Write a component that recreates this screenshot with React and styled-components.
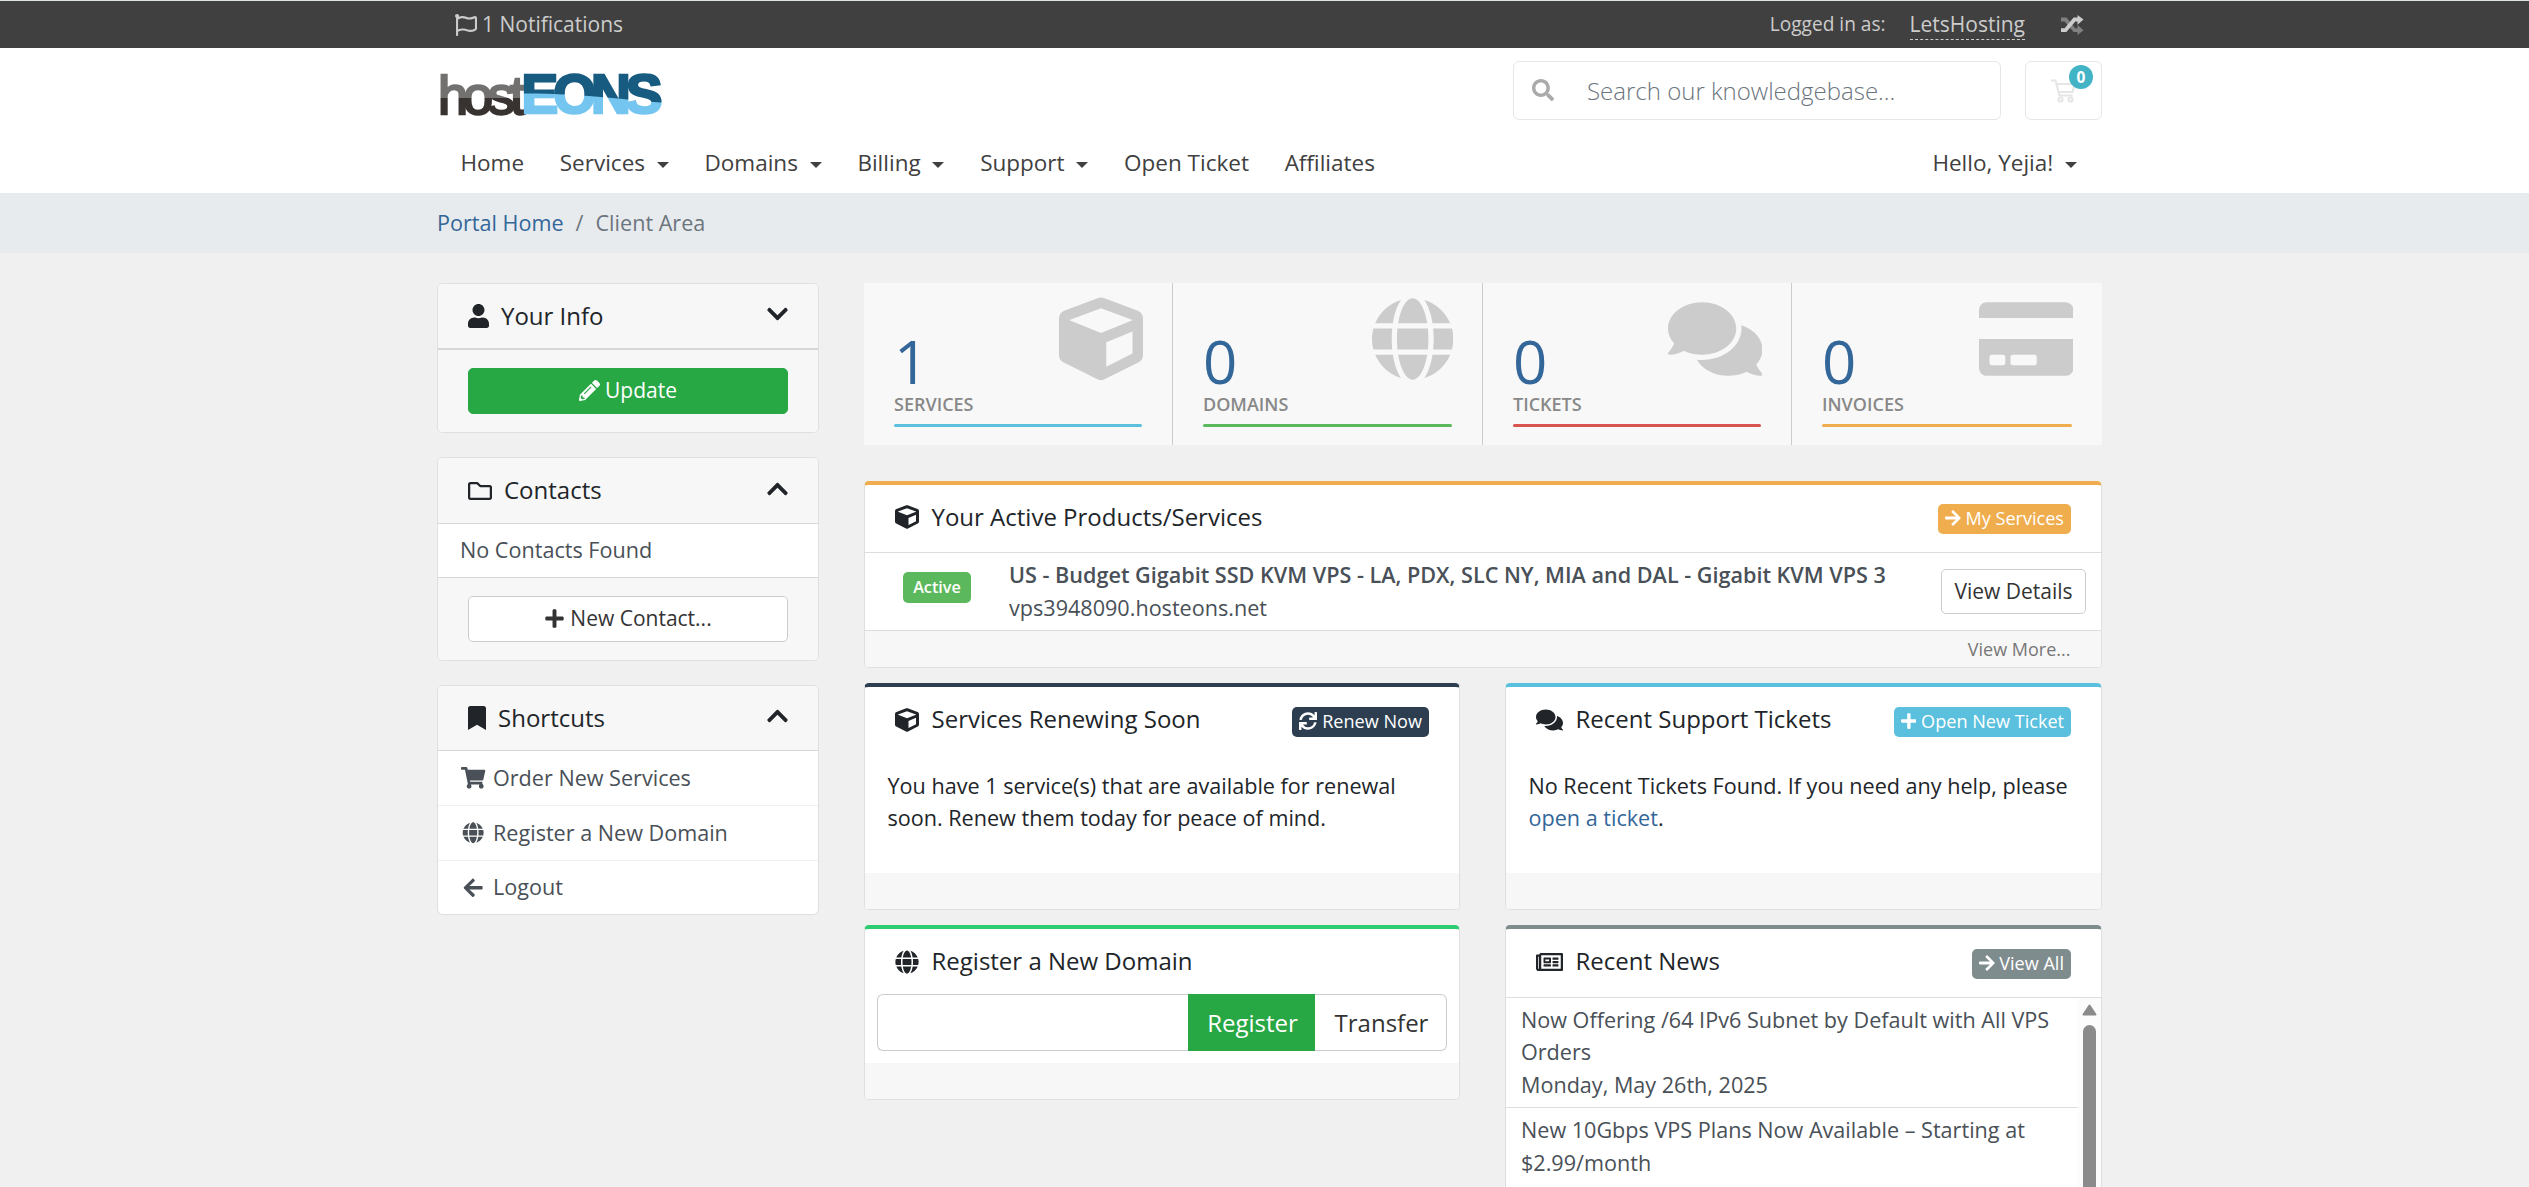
import React from 'react';
import styled, { createGlobalStyle } from "styled-components";
import {
    FaRegFlag, FaSearch, FaUser, FaChevronDown, FaChevronUp, FaPencilAlt, FaRegFolder, FaPlus,
    FaBookmark, FaShoppingCart, FaGlobe, FaArrowLeft, FaArrowRight, FaCube, FaComments,
    FaCreditCard, FaSync, FaRegNewspaper
} from "react-icons/fa";

const nav = [
    {name: "Home"},
    {name: "Services", menu: true},
    {name: "Domains", menu: true},
    {name: "Billing", menu: true},
    {name: "Support", menu: true},
    {name: "Open Ticket"},
    {name: "Affiliates"},
];

const tiles = [
    {count: 1, title: "Services", color: "#5bc0de", icon: FaCube, width: 84},
    {count: 0, title: "Domains", color: "#5cb85c", icon: FaGlobe, width: 81.4},
    {count: 0, title: "Tickets", color: "#d9534f", icon: FaComments, width: 94.5},
    {count: 0, title: "Invoices", color: "#f0ad4e", icon: FaCreditCard, width: 94.5},
];

const shortcuts = [
    {name: "Order New Services", icon: FaShoppingCart},
    {name: "Register a New Domain", icon: FaGlobe},
    {name: "Logout", icon: FaArrowLeft},
];

const news = [
    {title: "Now Offering /64 IPv6 Subnet by Default with All VPS Orders", date: "Monday, May 26th, 2025"},
    {title: "New 10Gbps VPS Plans Now Available – Starting at $2.99/month", date: "Sunday, May 25th, 2025"},
];

const Logo = () => (
    <svg width="228" height="46" viewBox="0 0 228 46">
        <defs>
            <linearGradient id="host" x1="0" y1="0" x2="0" y2="46" gradientUnits="userSpaceOnUse">
                <stop offset="0.56" stopColor="#73716f"/>
                <stop offset="0.56" stopColor="#383330"/>
            </linearGradient>
            <pattern id="eons" width="228" height="46" patternUnits="userSpaceOnUse">
                <rect width="228" height="46" fill="#75c5f1"/>
                <path d="M0 0H228V31C190 29 150 21.5 84 21.5H0Z" fill="#185b81"/>
            </pattern>
        </defs>
        <text x="-2" y="41.5" fontFamily="Liberation Sans, sans-serif" fontSize="54" fill="url(#host)"
              stroke="url(#host)" strokeWidth="2.4" textLength="87" lengthAdjust="spacing">host</text>
        <text x="81.5" y="41" fontFamily="Liberation Sans, sans-serif" fontWeight="700" fontSize="55"
              fill="url(#eons)" stroke="url(#eons)" strokeWidth="2.6" textLength="141" lengthAdjust="spacing">EONS</text>
    </svg>
);

const CartIcon = () => (
    <svg width="26" height="24" viewBox="0 0 26 24" fill="none" stroke="#e6e6e6" strokeWidth="2.2">
        <path d="M0 1.5H4.5L8.5 16.5H21.5M5.5 5H24L21.5 13H7.8"/>
        <circle cx="9.5" cy="20.5" r="2"/>
        <circle cx="19.5" cy="20.5" r="2"/>
    </svg>
);

const ShuffleIcon = () => (
    <svg width="23" height="20" viewBox="0 0 23 20" fill="none" strokeWidth="3.8">
        <path d="M0 4.5H4.5L13.5 15.2H18" stroke="#808080"/>
        <path d="M16.5 10L22.5 15.2L16.5 20Z" fill="#808080"/>
        <path d="M0 15.2H4.5L13.5 4.5H18" stroke="#ccc"/>
        <path d="M16.5 0L22.5 4.5L16.5 9.8Z" fill="#ccc"/>
    </svg>
);

const App = () => {
    return (
        <Page>
            <GlobalStyle/>
            <TopBar>
                <Container>
                    <Notifications><FaRegFlag/>1 Notifications</Notifications>
                    <Account>
                        <span>Logged in as:</span>
                        <a>LetsHosting</a>
                        <ShuffleIcon/>
                    </Account>
                </Container>
            </TopBar>
            <Header>
                <Container>
                    <Logo/>
                    <Tools>
                        <Search>
                            <FaSearch/>
                            <input type="text" placeholder="Search our knowledgebase..."/>
                        </Search>
                        <Cart>
                            <CartIcon/>
                            <span>0</span>
                        </Cart>
                    </Tools>
                </Container>
            </Header>
            <Nav>
                <Container>
                    <ul>
                        {nav.map(item => (
                            <li key={item.name}>{item.name}{item.menu && <Caret/>}</li>
                        ))}
                    </ul>
                    <ul>
                        <li>Hello, Yejia!<Caret/></li>
                    </ul>
                </Container>
            </Nav>
            <Breadcrumb>
                <Container>
                    <a>Portal Home</a>
                    <span>/</span>
                    <p>Client Area</p>
                </Container>
            </Breadcrumb>
            <Body>
                <Sidebar>
                    <SideCard>
                        <SideHeader $height={66} $line={2} $icon={21}>
                            <FaUser/>Your Info<FaChevronDown className="arrow"/>
                        </SideHeader>
                        <SideFooter>
                            <SideButton $green><FaPencilAlt/>Update</SideButton>
                        </SideFooter>
                    </SideCard>
                    <SideCard>
                        <SideHeader $height={66} $line={1} $icon={24}>
                            <FaRegFolder/>Contacts<FaChevronUp className="arrow"/>
                        </SideHeader>
                        <SideItem $height={53}>No Contacts Found</SideItem>
                        <SideFooter $line>
                            <SideButton><FaPlus/>New Contact...</SideButton>
                        </SideFooter>
                    </SideCard>
                    <SideCard>
                        <SideHeader $height={65} $line={1} $icon={18}>
                            <FaBookmark/>Shortcuts<FaChevronUp className="arrow"/>
                        </SideHeader>
                        {shortcuts.map(({name, icon: Icon}) => (
                            <SideItem key={name} $height={54.4}><i><Icon/></i>{name}</SideItem>
                        ))}
                    </SideCard>
                </Sidebar>
                <Main>
                    <Tiles>
                        {tiles.map(({count, title, color, icon: Icon, width}) => (
                            <Tile key={title} $color={color} $icon={width}>
                                <Icon className="icon"/>
                                <h2>{count}</h2>
                                <p>{title}</p>
                                <hr/>
                            </Tile>
                        ))}
                    </Tiles>
                    <Panel $color="#f0ad4e">
                        <PanelHeader $line>
                            <i><FaCube/></i>
                            <h3>Your Active Products/Services</h3>
                            <SmallButton $color="#f0ad4e" $icon={15.75}><FaArrowRight/>My Services</SmallButton>
                        </PanelHeader>
                        <Service>
                            <Badge>Active</Badge>
                            <div>
                                <b>US - Budget Gigabit SSD KVM VPS - LA, PDX, SLC NY, MIA and DAL - Gigabit KVM VPS 3</b>
                                <p>vps3948090.hosteons.net</p>
                            </div>
                            <DetailsButton>View Details</DetailsButton>
                        </Service>
                        <PanelFooter $line>View More...</PanelFooter>
                    </Panel>
                    <Columns>
                        <Column $width={596}>
                            <Panel $color="#2c3e50">
                                <PanelHeader $tall>
                                    <i><FaCube/></i>
                                    <h3>Services Renewing Soon</h3>
                                    <SmallButton $color="#2c3e50" $icon={18}><FaSync/>Renew Now</SmallButton>
                                </PanelHeader>
                                <PanelText>
                                    You have 1 service(s) that are available for renewal soon. Renew them today for peace of mind.
                                </PanelText>
                                <PanelFooter/>
                            </Panel>
                            <Panel $color="#2ecc71">
                                <PanelHeader $tall>
                                    <i><FaGlobe/></i>
                                    <h3>Register a New Domain</h3>
                                </PanelHeader>
                                <DomainForm>
                                    <input type="text"/>
                                    <button className="register">Register</button>
                                    <button className="transfer">Transfer</button>
                                </DomainForm>
                                <PanelFooter/>
                            </Panel>
                        </Column>
                        <Column $width={597}>
                            <Panel $color="#5bc0de">
                                <PanelHeader $tall $wide>
                                    <i><FaComments/></i>
                                    <h3>Recent Support Tickets</h3>
                                    <SmallButton $color="#5bc0de" $icon={15.75}><FaPlus/>Open New Ticket</SmallButton>
                                </PanelHeader>
                                <PanelText>
                                    No Recent Tickets Found. If you need any help, please <a>open a ticket</a>.
                                </PanelText>
                                <PanelFooter/>
                            </Panel>
                            <Panel $color="#7f8c8d">
                                <PanelHeader $tall $wide $line>
                                    <i><FaRegNewspaper/></i>
                                    <h3>Recent News</h3>
                                    <SmallButton $color="#7f8c8d" $icon={15.75}><FaArrowRight/>View All</SmallButton>
                                </PanelHeader>
                                <News>
                                    <ul>
                                        {news.map(item => (
                                            <li key={item.title}>{item.title}<br/>{item.date}</li>
                                        ))}
                                    </ul>
                                    <Scrollbar>
                                        <svg width="15" height="12" viewBox="0 0 15 12">
                                            <path d="M7.5 1.5L13.5 10.5H1.5Z" fill="#8b8b8b" stroke="#8b8b8b"
                                                  strokeWidth="2" strokeLinejoin="round"/>
                                        </svg>
                                        <span/>
                                    </Scrollbar>
                                </News>
                            </Panel>
                        </Column>
                    </Columns>
                </Main>
            </Body>
        </Page>
    );
};

const GlobalStyle = createGlobalStyle`
  * {
    box-sizing: border-box;
  }

  body {
    margin: 0;
  }

  h2, h3, p, ul {
    margin: 0;
    padding: 0;
    font-weight: 400;
  }

  li {
    list-style: none;
  }

  input, button {
    font-family: inherit;
    outline: none;
  }
`

const Page = styled.div`
  height: 100vh;
  overflow: hidden;
  background: #f0f0f0;
  color: #212529;
  font-family: "Open Sans", sans-serif;
  font-size: 21.6px;
  line-height: 32.4px;
`

const Container = styled.div`
  width: 1665px;
  margin-left: 437px;
  display: flex;
`

const TopBar = styled.div`
  height: 48px;
  border-top: 1px solid #dde3e0;
  background: #404040;
  color: #ccc;
  font-size: 21px;

  ${Container} {
    height: 47px;
    align-items: center;
    justify-content: space-between;
  }
`

const Notifications = styled.div`
  display: flex;
  align-items: center;
  margin-left: 18px;

  svg {
    width: 22px;
    height: 22px;
    margin-right: 5px;
  }
`

const Account = styled.div`
  display: flex;
  align-items: center;
  margin-right: 18px;

  span {
    font-size: 19.1px;
    margin-right: 24px;
  }

  a {
    line-height: 29px;
    margin-top: 1px;
    border-bottom: 1px dashed #ccc;
    margin-right: 36px;
  }
`

const Header = styled.div`
  height: 88px;
  background: #fff;

  ${Container} {
    padding-top: 13px;
    justify-content: space-between;
  }

  ${Container} > svg {
    margin: 11px 0 0 3px;
    overflow: visible;
  }
`

const Tools = styled.div`
  display: flex;
  gap: 24px;
`

const Search = styled.div`
  display: flex;
  align-items: center;
  width: 488px;
  height: 59px;
  padding-left: 18px;
  border: 1px solid #e6e6e6;
  border-radius: 6px;

  svg {
    width: 22px;
    height: 22px;
    margin-bottom: 1px;
    color: #aaa;
  }

  input {
    flex: 1;
    height: 50px;
    margin-left: 31px;
    border: none;
    font-size: 24px;
    font-weight: 300;

    &::placeholder {
      color: #6c757d;
    }
  }
`

const Cart = styled.div`
  position: relative;
  width: 77px;
  height: 59px;
  padding: 17px 0 0 25px;
  border: 1px solid #e6e6e6;
  border-radius: 6px;

  svg {
    display: block;
  }

  span {
    position: absolute;
    top: 3px;
    right: 8px;
    width: 24px;
    height: 24px;
    border-radius: 12px;
    background: #43b3c6;
    color: #fff;
    font-size: 15.5px;
    font-weight: 700;
    line-height: 24px;
    text-align: center;
  }
`

const Nav = styled.div`
  height: 57px;
  background: #fff;
  color: #404040;
  font-size: 22.5px;

  ${Container} {
    justify-content: space-between;
    padding: 11px 25px 0 23.5px;
  }

  ul {
    display: flex;
    gap: 35.7px;
  }

  li {
    display: flex;
    align-items: center;
  }
`

const Caret = styled.span`
  margin: 3px 0 0 11.8px;
  border-top: 6px solid #404040;
  border-left: 6px solid transparent;
  border-right: 6px solid transparent;
`

const Breadcrumb = styled.div`
  height: 60px;
  background: #e8ebee;

  ${Container} {
    height: 60px;
    align-items: center;
  }

  a {
    color: #369;
  }

  span {
    margin: 0 12px;
    color: #6c757d;
  }

  p {
    color: #6c757d;
  }
`

const Body = styled.div`
  width: 1665px;
  margin-left: 437px;
  padding-top: 30px;
  display: flex;
  justify-content: space-between;
  align-items: flex-start;
`

const Sidebar = styled.div`
  width: 382px;
  display: flex;
  flex-direction: column;
  gap: 24px;
`

const SideCard = styled.div`
  border: 1px solid #dfdfdf;
  border-radius: 6px;
  background: #fff;
  overflow: hidden;
`

const SideHeader = styled.div`
  display: flex;
  align-items: center;
  height: ${props => props.$height}px;
  padding: 0 30px 0 29.5px;
  border-bottom: ${props => props.$line}px solid #d6d6d6;
  background: #f7f7f7;
  font-size: 24px;

  svg {
    width: ${props => props.$icon}px;
    height: 24px;
    margin-right: 12.5px;
  }

  .arrow {
    width: 21px;
    margin: 0 0 4px auto;
  }
`

const SideFooter = styled.div`
  padding: 18px 30px;
  border-top: ${props => props.$line ? "1px solid #d6d6d6" : "none"};
  background: #f7f7f7;
`

const SideButton = styled.button`
  display: flex;
  align-items: center;
  justify-content: center;
  width: 100%;
  height: 46px;
  padding: 0 0 2px;
  border: 1px solid ${props => props.$green ? "#28a745" : "#ccc"};
  border-radius: 5px;
  background: ${props => props.$green ? "#28a745" : "#fff"};
  color: ${props => props.$green ? "#fff" : "#333"};
  font-size: 21px;

  svg {
    margin-right: 5px;
  }
`

const SideItem = styled.div`
  display: flex;
  align-items: center;
  height: ${props => props.$height}px;
  padding-left: 22px;
  color: #495057;

  & + & {
    border-top: 1px solid #f0f0f0;
  }

  i {
    display: flex;
    justify-content: center;
    width: 27px;
    margin-right: 6px;
  }

  svg {
    width: 24.3px;
    height: 21.6px;
  }
`

const Main = styled.div`
  width: 1238px;
`

const Tiles = styled.div`
  display: grid;
  grid-template-columns: 309px 310px 309px 310px;
  height: 162px;
  margin-bottom: 36px;
  background: #f8f8f8;
`

const Tile = styled.div`
  position: relative;
  padding: 48px 30px 0;
  border-right: 1px solid #ccc;

  &:last-child {
    border-right: none;
  }

  .icon {
    position: absolute;
    top: 14px;
    right: 29px;
    width: ${props => props.$icon}px;
    height: 84px;
    color: #ccc;
  }

  h2 {
    color: #369;
    font-size: 60px;
    line-height: 60px;
  }

  p {
    color: #888;
    font-size: 18px;
    font-weight: 600;
    line-height: 27px;
    text-transform: uppercase;
  }

  hr {
    height: 3px;
    margin: 6px 0 0;
    border: none;
    border-radius: 2px;
    background: ${props => props.$color};
  }
`

const Panel = styled.div`
  border: 1px solid #dfdfdf;
  border-top: 4px solid ${props => props.$color};
  border-radius: 5px;
  background: #fff;
  overflow: hidden;
`

const PanelHeader = styled.div`
  display: flex;
  align-items: flex-start;
  height: ${props => props.$tall ? 69 : 68}px;
  padding: ${props => props.$tall ? 20 : 19}px 30px 0;
  border-bottom: ${props => props.$line ? "1px solid #ddd" : "none"};

  i {
    display: flex;
    align-items: center;
    height: 26px;
    margin-right: 12.5px;
  }

  i svg {
    width: ${props => props.$wide ? 27 : 24}px;
    height: 24px;
  }

  h3 {
    flex: 1;
    margin-top: ${props => props.$tall ? -2 : -1}px;
    font-size: 24px;
    line-height: 28.8px;
  }
`

const SmallButton = styled.button`
  display: flex;
  align-items: center;
  height: 30px;
  padding: 0 7px 2px;
  border: none;
  border-radius: 5px;
  background: ${props => props.$color};
  color: #fff;
  font-size: 18.1px;

  svg {
    width: ${props => props.$icon}px;
    height: 18px;
    margin-right: 4.7px;
  }
`

const Service = styled.div`
  display: flex;
  align-items: flex-start;
  height: 77px;
  color: #495057;
  line-height: 33px;

  div {
    flex: 1;
    padding-top: 5px;
  }

  b {
    font-weight: 600;
  }
`

const Badge = styled.span`
  width: 68px;
  height: 31px;
  margin: 19px 38px 0 38px;
  border-radius: 5px;
  background: #5cb85c;
  color: #fff;
  font-size: 16.2px;
  font-weight: 600;
  line-height: 30px;
  text-align: center;
`

const DetailsButton = styled.button`
  width: 145px;
  height: 45px;
  margin: 16px 15px 0 0;
  padding: 0 0 1px;
  border: 1px solid #ccc;
  border-radius: 5px;
  background: #fff;
  color: #333;
  font-size: 21px;
`

const PanelFooter = styled.div`
  height: ${props => props.$line ? 37 : 36}px;
  padding-right: 30.5px;
  border-top: ${props => props.$line ? "1px solid #ddd" : "none"};
  background: #f7f7f7;
  color: #777;
  font-size: 18px;
  line-height: 36px;
  text-align: right;
`

const Columns = styled.div`
  display: flex;
  justify-content: space-between;
  margin-top: 15px;
`

const Column = styled.div`
  display: flex;
  flex-direction: column;
  gap: 15px;
  width: ${props => props.$width}px;
`

const PanelText = styled.div`
  height: 117px;
  padding: 14px 22.5px 0;

  a {
    color: #369;
  }
`

const DomainForm = styled.div`
  display: flex;
  height: 69px;
  margin-top: -4px;
  padding: 0 12px 12px;

  input, button {
    height: 57px;
    padding: 0;
    border: 1px solid #ccc;
    background: #fff;
    color: #333;
    font-size: 24px;
  }

  input {
    flex: 1;
    min-width: 0;
    border-right: none;
    border-radius: 6px 0 0 6px;
  }

  .register {
    width: 127px;
    padding-left: 2px;
    border-color: #28a745;
    background: #28a745;
    color: #fff;
  }

  .transfer {
    width: 132px;
    padding-left: 2px;
    border-left: none;
    border-radius: 0 6px 6px 0;
  }
`

const News = styled.div`
  display: flex;
  height: 450px;
  overflow: hidden;
  color: #495057;

  ul {
    width: 572px;
  }

  li {
    padding: 6px 15px;
    border-bottom: 1px solid #ddd;
  }
`

const Scrollbar = styled.div`
  flex: 1;
  display: flex;
  flex-direction: column;
  align-items: center;
  padding-top: 6px;
  background: #fcfcfc;

  span {
    flex: 1;
    width: 13px;
    margin-top: 9px;
    border-radius: 7px;
    background: #8b8b8b;
  }
`

export default App;
